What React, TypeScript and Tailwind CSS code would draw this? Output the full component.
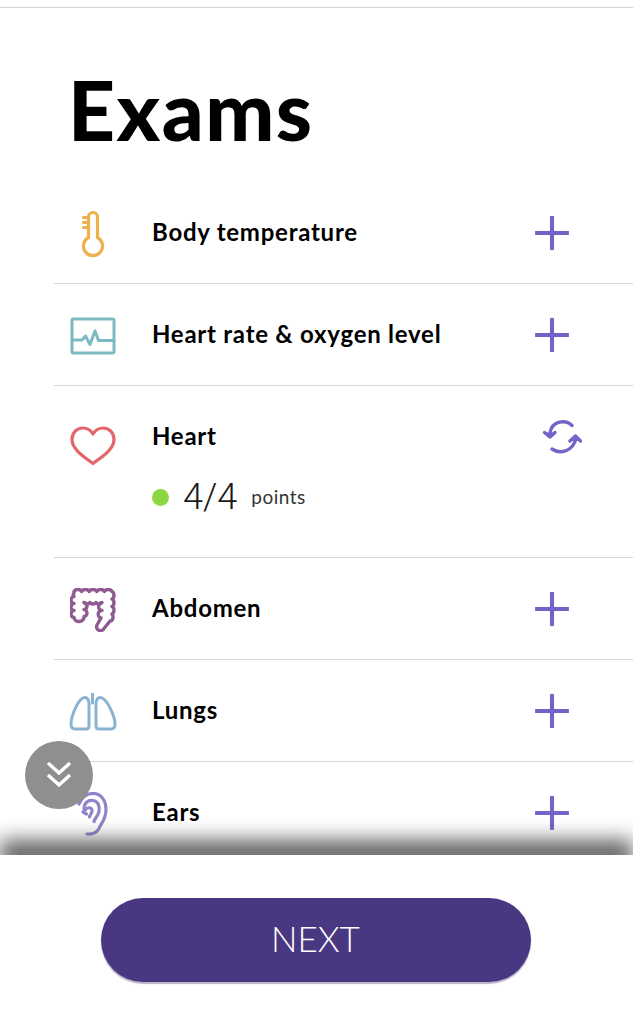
import { Plus } from "lucide-react";
import type { ReactNode } from "react";

const Thermometer = () => (
  <svg width="28" height="48" viewBox="0 0 28 48" fill="none" stroke="#eeb04a" strokeWidth="3.200" strokeLinecap="round">
    <path d="M9.500 27.500V7a4.500 4.500 0 0 1 9 0v20.500a9.600 9.600 0 1 1-9 0Z" />
    <path d="M4.500 7.500h5M4.500 12.500h5M4.500 17.500h5" />
  </svg>
);

const Monitor = () => (
  <svg width="46" height="40" viewBox="0 0 46 40" fill="none" stroke="#7db9c2" strokeWidth="3" strokeLinejoin="round" strokeLinecap="round">
    <rect x="2" y="3" width="42" height="34" rx="1.500" />
    <path d="M2 24h10l3.500-4 4.500 8.500 5-13.500 3.500 9.500H44" />
  </svg>
);

const HeartIcon = () => (
  <svg width="46" height="40" viewBox="0 0 46 40" fill="none" stroke="#e2666a" strokeWidth="3.200" strokeLinejoin="round">
    <path d="M23 37.500C16 32 2 24 2 13.500 2 6.500 7 2 12.800 2 17.500 2 21 4.500 23 8c2-3.500 5.500-6 10.200-6C39 2 44 6.500 44 13.500 44 24 30 32 23 37.500Z" />
  </svg>
);

const Intestine = () => (
  <svg width="46" height="44" viewBox="0 0 46 44" fill="none" stroke="#8f5a90" strokeWidth="3.400" strokeLinejoin="round">
    <path d="M4 3.500a4 3 0 0 1 7.600 0a4 3 0 0 1 7.600 0a4 3 0 0 1 7.600 0a4 3 0 0 1 7.600 0a4 3 0 0 1 7.600 0a3 4 0 0 1 0 7.500a3 4 0 0 1 0 7.500a3 4 0 0 1 0 7.500a3 4 0 0 1-2 7L34 40.500a3.600 3.600 0 0 1-7-3.500L31 30a3 3.500 0 0 1 1-7.500a3 3.500 0 0 1 0-8a3.500 3 0 0 1-6 0a3.500 3 0 0 1-6 0a3.500 3 0 0 1-6 0a3 3.500 0 0 1 0 7a3 3.500 0 0 1 0 7a5 4.500 0 0 1-10 1a3 3.500 0 0 1 0-7a3 3.500 0 0 1 0-7a3 3.500 0 0 1 0-7a3 2.500 0 0 1 0-3.500Z" />
  </svg>
);

const LungsIcon = () => (
  <svg width="48" height="38" viewBox="0 0 48 38" fill="none" stroke="#88b4d2" strokeWidth="3" strokeLinejoin="round" strokeLinecap="round">
    <path d="M23.500 1v9" />
    <path d="M20 33V10c0-3-2-5.500-4-5.500C9 4.500 2 24 2 31c0 3 1 5 4 5h11c2 0 3-1 3-3Z" />
    <path d="M27 33V10c0-3 2-5.500 4-5.500 7 0 15 19.500 15 26.500 0 3-1 5-4 5H30c-2 0-3-1-3-3Z" />
  </svg>
);

const EarIcon = () => (
  <svg width="32" height="44" viewBox="0 0 32 44" fill="none" stroke="#8f83cc" strokeWidth="3.200" strokeLinecap="round">
    <path d="M2 12C5 5 10 1.500 16 1.500c8 0 13 7 13 16 0 10-5 14-7 19-2 4-6 6-12 5.500" />
    <path d="M7 17c0-6 4-9 9-8.500 5 .500 7 6 6 11-1 5-4 6-5 10" />
    <path d="M8 18c2-3 6-3 7 0 .800 3-2 4-2.500 7" />
    <path d="M6 20l3.500 2" />
  </svg>
);

const Refresh = () => (
  <svg width="40" height="36" viewBox="0 0 40 36" fill="none" stroke="#7663c7" strokeWidth="3.400" strokeLinecap="round" strokeLinejoin="round">
    <path d="M30 5.500C24 -.500 10 0 8 13" />
    <path d="M2.500 12.500 8 17l5-4.500" fill="#7663c7" />
    <path d="M10 29c7 5 21 3.500 24-11" />
    <path d="M28 21l5.500-5 5 5" fill="#7663c7" />
  </svg>
);

function ExamRow({ icon, label, action, children, height }: { icon: ReactNode; label: string; action?: ReactNode; children?: ReactNode; height: string }) {
  return (
    <div className={`flex shrink-0 border-b border-[#d6d6d6] ${height}`}>
      <div className="flex w-[98px] justify-start pt-[28px] pl-[15px]">
        <div className="flex h-[48px] w-[48px] items-center justify-center">{icon}</div>
      </div>
      <div className="flex-1 pt-[35px]">
        <div className="text-[24px] leading-[30px] font-bold tracking-[0.75px] text-black">{label}</div>
        {children}
      </div>
      <div className="w-[97px] pt-[22px]">
        {action ?? <Plus size={58} strokeWidth={1.700} color="#7663c7" strokeLinecap="butt" className="-ml-[13px]" />}
      </div>
    </div>
  );
}

export default function App() {
  return (
    <div className="flex h-[1024px] w-[633px] flex-col overflow-hidden bg-white font-['Lato',sans-serif]">
      <div className="relative mt-[7px] h-[848px] shrink-0 overflow-hidden border-t border-[#d4d4d4]">
        <h1 className="pt-[28px] pl-[68px] text-[82px] leading-[147px] font-black tracking-[1.500px] text-black">Exams</h1>
        <div className="ml-[54px] flex flex-col">
          <ExamRow icon={<Thermometer />} label="Body temperature" height="h-[102px] -mt-[1px]" />
          <ExamRow icon={<Monitor />} label="Heart rate & oxygen level" height="h-[102px]" />
          <ExamRow
            icon={<div className="mt-[16px]"><HeartIcon /></div>}
            label="Heart"
            height="h-[172px]"
            action={<div className="pt-[12px] ml-[6px]"><Refresh /></div>}
          >
            <div className="mt-[24px] flex items-center">
              <span className="h-[17px] w-[17px] rounded-full bg-[#8ed63f]" />
              <span className="ml-[14px] font-['Roboto',sans-serif] text-[36px] leading-[44px] font-light text-[#1a1a1a]">4/4</span>
              <span className="ml-[14px] text-[19px] leading-[44px] tracking-[0.5px] text-[#333]">points</span>
            </div>
          </ExamRow>
          <ExamRow icon={<Intestine />} label="Abdomen" height="h-[102px]" />
          <ExamRow icon={<LungsIcon />} label="Lungs" height="h-[102px]" />
          <ExamRow icon={<EarIcon />} label="Ears" height="h-[102px]" />
        </div>

        <div className="absolute inset-x-0 -bottom-[13px] h-[28px] bg-[#5f5f5f] blur-[10px]" />
        <div className="absolute top-[733px] left-[25px] flex h-[68px] w-[68px] items-center justify-center rounded-full bg-[#8f8f8f]">
          <svg width="26" height="28" viewBox="0 0 26 28" fill="none" stroke="#fff" strokeWidth="3.400">
            <path d="M2 2l11 10L24 2" />
            <path d="M2 14l11 10 11-10" />
          </svg>
        </div>
      </div>

      <div className="flex flex-1 justify-center pt-[43px] pr-[2px]">
        <button className="flex h-[84px] w-[430px] items-center justify-center rounded-full bg-[#4a3782] pb-[4px] text-[35px] font-light text-white shadow-[0_2px_1px_#b9b3c9]">
          NEXT
        </button>
      </div>
    </div>
  );
}
